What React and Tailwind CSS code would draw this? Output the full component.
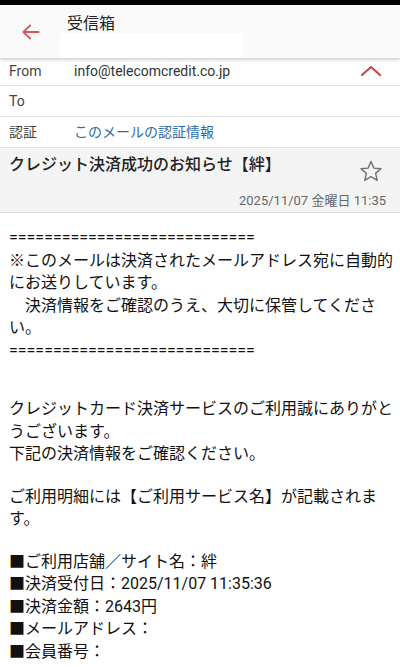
import React from 'react';

const font = { fontFamily: "Roboto, 'Noto Sans CJK JP', sans-serif" };

function BackArrow() {
  return (
    <svg width="20" height="20" viewBox="0 0 24 24" fill="none" stroke="#d2555c" strokeWidth="2.2" strokeLinecap="round" strokeLinejoin="round">
      <path d="M21 12H3" />
      <path d="M11 4l-8 8 8 8" />
    </svg>
  );
}

function ChevronUp() {
  return (
    <svg width="22" height="12" viewBox="0 0 22 12" fill="none" stroke="#c9464f" strokeWidth="2.2" strokeLinecap="round" strokeLinejoin="round">
      <path d="M2 10l9-8 9 8" />
    </svg>
  );
}

function Star() {
  return (
    <svg width="24" height="24" viewBox="0 0 24 24" fill="none" stroke="#707070" strokeWidth="1.4" strokeLinejoin="round">
      <path d="M12 2.5l2.9 6.6 7.1.6-5.4 4.7 1.6 7-6.2-3.7-6.2 3.7 1.6-7L2 9.7l7.1-.6z" />
    </svg>
  );
}

const Line = ({ children }) => <div className="h-[22.5px] leading-[22.5px] whitespace-nowrap">{children}</div>;

export default function App() {
  const eq = '============================';
  return (
    <div className="w-[400px] h-[667px] overflow-hidden bg-white text-[#222]" style={font}>
      <div className="h-[5px] bg-black" />

      {/* Header */}
      <div className="relative h-[53px] bg-[#fafafa] shadow-[0_2px_3px_rgba(0,0,0,0.18)] z-10 flex">
        <div className="w-[62px] flex items-center pl-[21px] pt-[1px]">
          <BackArrow />
        </div>
        <div className="flex flex-col">
          <div className="pt-[8px] pl-[5px] text-[16px] leading-[22px] text-[#222]">受信箱</div>
          <div className="ml-[-2px] mt-[-2px] w-[182px] h-[25px] bg-white" />
        </div>
      </div>

      {/* Header fields */}
      <div className="text-[14px]">
        <div className="h-[28px] flex items-center border-b border-[#e2e2e2]">
          <span className="w-[74px] pl-[9px] text-[#444]">From</span>
          <span className="flex-1 text-[#333]">info@telecomcredit.co.jp</span>
          <span className="pr-[18px] pb-[2px]"><ChevronUp /></span>
        </div>
        <div className="h-[31px] flex items-center border-b border-[#e2e2e2]">
          <span className="w-[74px] pl-[9px] text-[#444]">To</span>
        </div>
        <div className="h-[31px] flex items-center border-b border-[#e2e2e2]">
          <span className="w-[74px] pl-[9px] text-[#444]">認証</span>
          <span className="text-[#2d6cae]">このメールの認証情報</span>
        </div>
      </div>

      {/* Subject */}
      <div className="bg-[#f4f4f4] h-[65px] border-b border-[#dcdcdc] flex flex-col">
        <div className="flex">
          <div className="flex-1 pl-[9px] pt-[5px] text-[16px] leading-[24px] font-medium text-[#222]">クレジット決済成功のお知らせ【絆】</div>
          <div className="pt-[11px] pr-[17px]">
            <Star />
          </div>
        </div>
        <div className="mt-auto pb-[2px] text-right text-[13px] leading-[18px] text-[#666] pr-[14px]">2025/11/07 金曜日 11:35</div>
      </div>

      {/* Body */}
      <div className="pl-[9px] pt-[14px] text-[16px] text-[#111]">
        <Line>{eq}</Line>
        <Line>※このメールは決済されたメールアドレス宛に自動的</Line>
        <Line>にお送りしています。</Line>
        <Line>　決済情報をご確認のうえ、大切に保管してくださ</Line>
        <Line>い。</Line>
        <Line>{eq}</Line>
        <div className="h-[36px]" />
        <Line>クレジットカード決済サービスのご利用誠にありがと</Line>
        <Line>うございます。</Line>
        <Line>下記の決済情報をご確認ください。</Line>
        <div className="h-[20px]" />
        <Line>ご利用明細には【ご利用サービス名】が記載されま</Line>
        <Line>す。</Line>
        <div className="h-[20px]" />
        <Line>■ご利用店舗／サイト名：絆</Line>
        <Line>■決済受付日：2025/11/07 11:35:36</Line>
        <Line>■決済金額：2643円</Line>
        <Line>■メールアドレス：</Line>
        <Line>■会員番号：</Line>
      </div>
    </div>
  );
}
